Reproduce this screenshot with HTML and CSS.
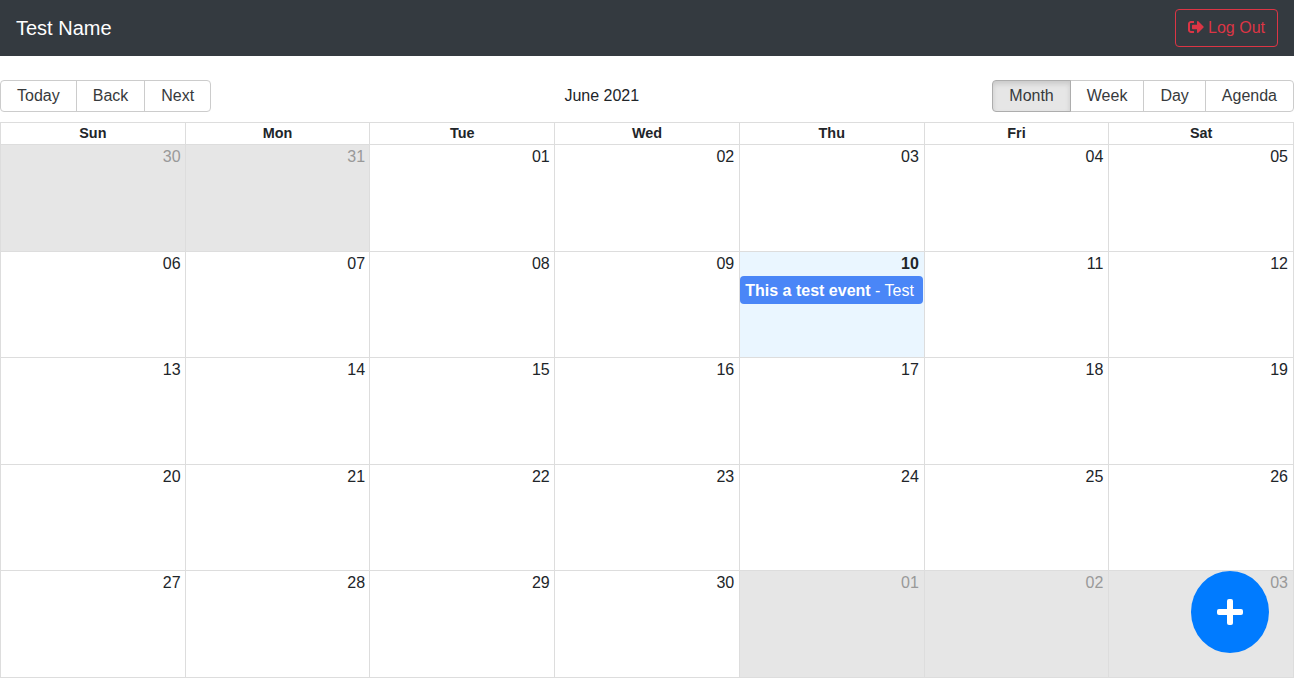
FILE: index.html
```html
<!DOCTYPE html>
<html lang="en">
<head>
<meta charset="utf-8">
<title>Calendar</title>
<link rel="stylesheet" href="styles.css">
</head>
<body>
<nav class="navbar">
  <span class="brand">Test Name</span>
  <button class="logout" type="button"><svg class="logout-icon" viewBox="0 0 512 512" aria-hidden="true"><path fill="currentColor" d="M497 273L329 441c-15 15-41 4.500-41-17v-96H152c-13.300 0-24-10.700-24-24v-96c0-13.300 10.700-24 24-24h136V88c0-21.400 25.900-32 41-17l168 168c9.300 9.400 9.300 24.600 0 34zM192 436v-40c0-6.600-5.400-12-12-12H96c-17.700 0-32-14.300-32-32V160c0-17.700 14.300-32 32-32h84c6.600 0 12-5.400 12-12V76c0-6.600-5.400-12-12-12H96c-53 0-96 43-96 96v192c0 53 43 96 96 96h84c6.600 0 12-5.400 12-12z"/></svg> Log Out</button>
</nav>
<main class="calendar">
  <div class="toolbar">
    <div class="btn-group">
      <button type="button">Today</button><button type="button">Back</button><button type="button">Next</button>
    </div>
    <span class="toolbar-label">June 2021</span>
    <div class="btn-group">
      <button type="button" class="active">Month</button><button type="button">Week</button><button type="button">Day</button><button type="button">Agenda</button>
    </div>
  </div>
  <div class="month">
    <div class="header-row">
      <div class="header">Sun</div><div class="header">Mon</div><div class="header">Tue</div><div class="header">Wed</div><div class="header">Thu</div><div class="header">Fri</div><div class="header">Sat</div>
    </div>
    <div class="week">
      <div class="week-bg"><div class="bg off"></div><div class="bg off"></div><div class="bg"></div><div class="bg"></div><div class="bg"></div><div class="bg"></div><div class="bg"></div></div>
      <div class="week-content">
        <div class="date-row"><div class="date dim">30</div><div class="date dim">31</div><div class="date">01</div><div class="date">02</div><div class="date">03</div><div class="date">04</div><div class="date">05</div></div>
      </div>
    </div>
    <div class="week">
      <div class="week-bg"><div class="bg"></div><div class="bg"></div><div class="bg"></div><div class="bg"></div><div class="bg today"></div><div class="bg"></div><div class="bg"></div></div>
      <div class="week-content">
        <div class="date-row"><div class="date">06</div><div class="date">07</div><div class="date">08</div><div class="date">09</div><div class="date now">10</div><div class="date">11</div><div class="date">12</div></div>
        <div class="event-row"><div class="segment"><div class="event"><strong>This a test event</strong> - Test</div></div></div>
      </div>
    </div>
    <div class="week">
      <div class="week-bg"><div class="bg"></div><div class="bg"></div><div class="bg"></div><div class="bg"></div><div class="bg"></div><div class="bg"></div><div class="bg"></div></div>
      <div class="week-content">
        <div class="date-row"><div class="date">13</div><div class="date">14</div><div class="date">15</div><div class="date">16</div><div class="date">17</div><div class="date">18</div><div class="date">19</div></div>
      </div>
    </div>
    <div class="week">
      <div class="week-bg"><div class="bg"></div><div class="bg"></div><div class="bg"></div><div class="bg"></div><div class="bg"></div><div class="bg"></div><div class="bg"></div></div>
      <div class="week-content">
        <div class="date-row"><div class="date">20</div><div class="date">21</div><div class="date">22</div><div class="date">23</div><div class="date">24</div><div class="date">25</div><div class="date">26</div></div>
      </div>
    </div>
    <div class="week">
      <div class="week-bg"><div class="bg"></div><div class="bg"></div><div class="bg"></div><div class="bg"></div><div class="bg off"></div><div class="bg off"></div><div class="bg off"></div></div>
      <div class="week-content">
        <div class="date-row"><div class="date">27</div><div class="date">28</div><div class="date">29</div><div class="date">30</div><div class="date dim">01</div><div class="date dim">02</div><div class="date dim">03</div></div>
      </div>
    </div>
  </div>
</main>
<button class="fab" type="button" aria-label="Add event"><svg class="fab-icon" viewBox="0 0 28 28" aria-hidden="true"><rect x="1" y="11" width="26" height="6" rx="2" fill="#fff"/><rect x="11" y="1" width="6" height="26" rx="2" fill="#fff"/></svg></button>
</body>
</html>
```
FILE: styles.css
```css
* { box-sizing: border-box; }
html, body { height: 678px; margin: 0; overflow: hidden; }
body {
  display: flex;
  flex-direction: column;
  font-family: "Liberation Sans", Arial, sans-serif;
  font-size: 16px;
  line-height: 1.5;
  color: #212529;
  background: #fff;
}
.navbar {
  flex: none;
  height: 56px;
  padding: 0 16px;
  display: flex;
  align-items: center;
  justify-content: space-between;
  background: #343a40;
}
.brand { font-size: 20px; color: #fff; }
.logout {
  height: 38px;
  padding: 6px 12px;
  font: inherit;
  color: #dc3545;
  background: transparent;
  border: 1px solid #dc3545;
  border-radius: 4px;
}
.logout-icon { width: 16px; height: 16px; vertical-align: -2px; }
.calendar {
  flex: 1;
  min-height: 0;
  display: flex;
  flex-direction: column;
  padding-top: 24px;
}
.toolbar {
  flex: none;
  display: flex;
  align-items: center;
  margin-bottom: 10px;
}
.toolbar-label { flex: 1; padding: 0 10px; text-align: center; }
.btn-group { display: flex; }
.btn-group button {
  height: 32px;
  padding: 0 16px;
  margin-left: -1px;
  font: inherit;
  line-height: 18px;
  color: #373a3c;
  background: transparent;
  border: 1px solid #ccc;
}
.btn-group button:first-child { margin-left: 0; border-radius: 4px 0 0 4px; }
.btn-group button:last-child { border-radius: 0 4px 4px 0; }
.btn-group button.active {
  position: relative;
  background: #e6e6e6;
  border-color: #adadad;
  box-shadow: inset 0 3px 5px rgba(0, 0, 0, .125);
}
.month {
  flex: 1;
  min-height: 0;
  display: flex;
  flex-direction: column;
  border: 1px solid #ddd;
}
.header-row { flex: none; display: flex; height: 22px; }
.header {
  flex: 1 1 0;
  min-width: 0;
  padding: 0 3px;
  font-size: 14.4px;
  font-weight: bold;
  line-height: 20px;
  text-align: center;
  border-bottom: 1px solid #ddd;
}
.header + .header { border-left: 1px solid #ddd; }
.week { position: relative; flex: 1 1 0; min-height: 0; }
.week + .week { border-top: 1px solid #ddd; }
.week-bg { position: absolute; inset: 0; display: flex; }
.bg { flex: 1 1 0; min-width: 0; }
.bg + .bg { border-left: 1px solid #ddd; }
.off { background: #e6e6e6; }
.today { background: #eaf6ff; }
.week-content { position: relative; }
.date-row { display: flex; }
.date { flex: 0 0 14.2857%; padding-right: 5px; text-align: right; }
.dim { color: #999; }
.now { font-weight: bold; }
.event-row { display: flex; }
.segment { flex: 0 0 14.2857%; margin-left: 57.1428%; padding: 0 1px 1px; }
.event {
  padding: 3px 5px 1px;
  white-space: nowrap;
  overflow: hidden;
  color: #fff;
  background: #4a86f7;
  border-radius: 4px;
}
.fab {
  position: absolute;
  left: 1191px;
  top: 571px;
  width: 78px;
  height: 82px;
  padding: 0;
  display: flex;
  align-items: center;
  justify-content: center;
  background: #007bff;
  border: 0;
  border-radius: 50%;
}
.fab-icon { width: 28px; height: 28px; display: block; }
```
